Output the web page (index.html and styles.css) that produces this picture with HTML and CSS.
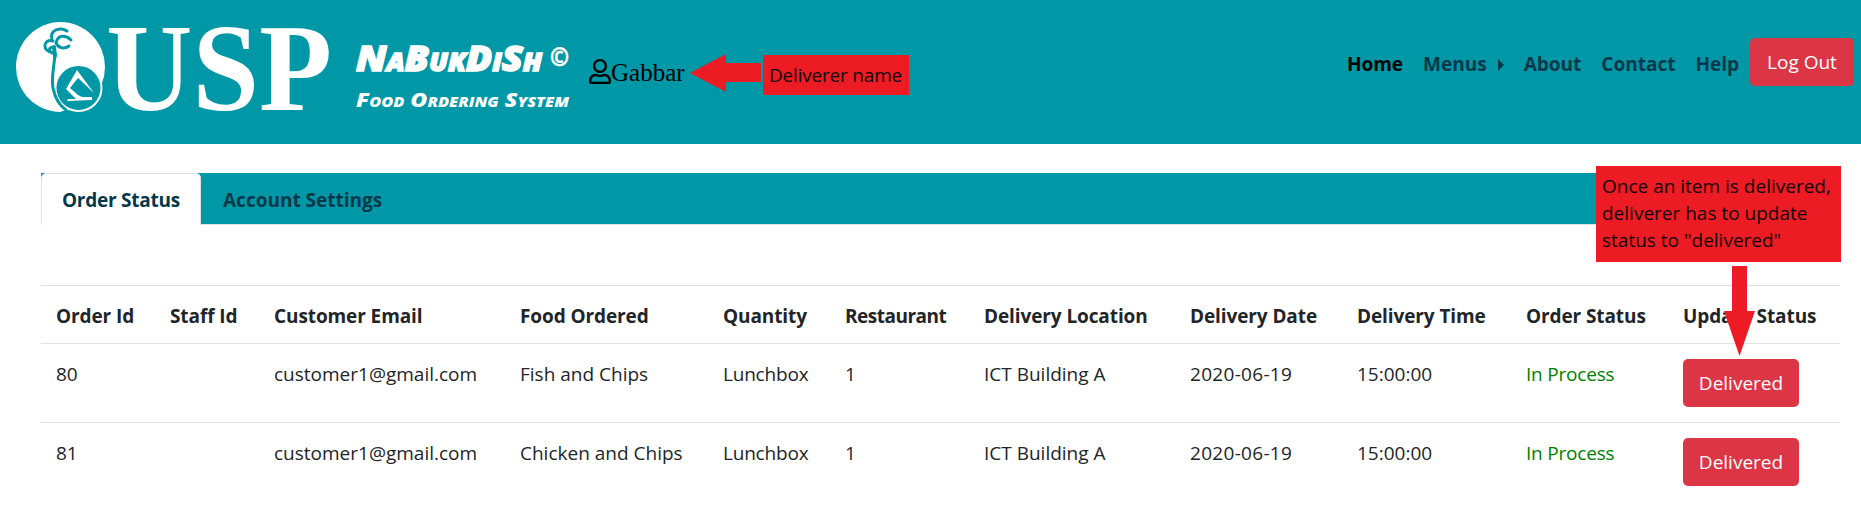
FILE: index.html
```html
<!DOCTYPE html>
<html lang="en">
<head>
<meta charset="utf-8">
<title>NaBukDiSh - Order Status</title>
<link rel="stylesheet" href="styles.css">
</head>
<body>
<header class="topbar">
  <svg class="logo" width="340" height="144" viewBox="0 0 340 144" role="img" aria-label="USP">
    <ellipse cx="60.500" cy="67" rx="44.500" ry="45" fill="#fff"/>
    <path d="M60 112C70 108 82 112 92 103L108 83V120H66Z" fill="#0097a7"/>
    <circle cx="78.500" cy="88" r="23" fill="#0097a7" stroke="#fff" stroke-width="2"/>
    <g fill="none" stroke="#0097a7" stroke-linecap="round">
      <path d="M55 54C54 68 51 78 53 88Q56 103 66 110" stroke-width="3"/>
      <path d="M52 40C49 29 61 27 67 31M56 43C58 33 67 36 71 40M56 43C59 49 65 49 69 46M53 41C43 38 41 52 54 53M54 47C48 47 49 51 52 53" stroke-width="3"/>
      <path d="M54 47L55 56" stroke-width="4"/>
    </g>
    <path d="M77 70L94 93L78 78L70 88L78 95L82 97H92V100L67 101L68 99H76L66 89Z" fill="#fff"/>
    <text class="logo-text" x="106" y="109.500" textLength="226" lengthAdjust="spacingAndGlyphs">USP</text>
  </svg>
  <svg class="brand" width="230" height="144" viewBox="0 0 230 144">
    <text class="brand-name" x="16" y="71" textLength="186" lengthAdjust="spacingAndGlyphs">NaBukDiSh</text>
    <text class="brand-copy" x="210" y="66" textLength="19" lengthAdjust="spacingAndGlyphs">©</text>
    <text class="brand-sub" x="16" y="107" textLength="213" lengthAdjust="spacingAndGlyphs">Food Ordering System</text>
  </svg>
  <div class="user">
    <svg width="22" height="25" viewBox="0 0 448 512"><path d="M313.600 304c-28.700 0-42.500 16-89.600 16s-60.800-16-89.600-16C60.200 304 0 364.200 0 438.400V464c0 26.500 21.500 48 48 48h352c26.500 0 48-21.500 48-48v-25.600c0-74.200-60.200-134.400-134.400-134.400zM400 464H48v-25.600c0-47.600 38.800-86.400 86.400-86.400 14.600 0 38.300 16 89.600 16 51.700 0 74.900-16 89.600-16 47.600 0 86.400 38.800 86.400 86.400V464zM224 288c79.500 0 144-64.500 144-144S303.500 0 224 0 80 64.500 80 144s64.500 144 144 144zm0-240c52.900 0 96 43.100 96 96s-43.100 96-96 96-96-43.100-96-96 43.100-96 96-96z"/></svg>
    <span>Gabbar</span>
  </div>
  <nav class="nav">
    <a class="nav-link active">Home</a>
    <a class="nav-link">Menus<i class="caret"></i></a>
    <a class="nav-link">About</a>
    <a class="nav-link">Contact</a>
    <a class="nav-link">Help</a>
    <button class="btn logout">Log Out</button>
  </nav>
</header>
<main class="content">
  <div class="tabs">
    <a class="tab selected">Order Status</a>
    <a class="tab">Account Settings</a>
  </div>
  <table class="orders">
    <colgroup><col class="c1"><col class="c2"><col class="c3"><col class="c4"><col class="c5"><col class="c6"><col class="c7"><col class="c8"><col class="c9"><col class="c10"><col class="c11"></colgroup>
    <thead>
      <tr><th>Order Id</th><th>Staff Id</th><th>Customer Email</th><th>Food Ordered</th><th>Quantity</th><th class="tight">Restaurant</th><th>Delivery Location</th><th>Delivery Date</th><th>Delivery Time</th><th>Order Status</th><th>Update Status</th></tr>
    </thead>
    <tbody>
      <tr><td>80</td><td></td><td>customer1@gmail.com</td><td>Fish and Chips</td><td class="tight">Lunchbox</td><td>1</td><td>ICT Building A</td><td class="date">2020-06-19</td><td>15:00:00</td><td class="process">In Process</td><td><button class="btn">Delivered</button></td></tr>
      <tr><td>81</td><td></td><td>customer1@gmail.com</td><td>Chicken and Chips</td><td class="tight">Lunchbox</td><td>1</td><td>ICT Building A</td><td class="date">2020-06-19</td><td>15:00:00</td><td class="process">In Process</td><td><button class="btn">Delivered</button></td></tr>
    </tbody>
  </table>
</main>
<svg class="arrow arrow-name" width="71" height="38" viewBox="0 0 71 38"><path d="M0 19L36 0V9H71V28H36V38Z"/></svg>
<div class="note note-name">Deliverer name</div>
<svg class="arrow arrow-status" width="31" height="90" viewBox="0 0 31 90"><path d="M8 0H23V45H31L15.500 90L0 45H8Z"/></svg>
<div class="note note-status">Once an item is delivered,<br>deliverer has to update<br>status to "delivered"</div>
</body>
</html>
```
FILE: styles.css
```css
* { box-sizing: border-box; }
body {
  margin: 0;
  height: 512px;
  overflow: hidden;
  position: relative;
  background: #fff;
  color: #212529;
  font: 19px/27px "Open Sans", "Noto Sans", sans-serif;
}
.topbar {
  display: flex;
  height: 144px;
  padding-right: 7px;
  background: #0097a7;
}
.logo, .brand { flex: none; display: block; overflow: visible; }
.logo-text {
  font: bold 125px "Liberation Serif", serif;
  fill: #fff;
}
.brand { fill: #fff; font-family: "Open Sans", sans-serif; font-style: italic; font-weight: 800; }
.brand-name { font-size: 36px; font-variant: small-caps; stroke: #fff; stroke-width: 1.5px; }
.brand-copy { font-size: 25px; font-weight: 700; stroke: #fff; stroke-width: 0.7px; }
.brand-sub { font-size: 20px; font-variant: small-caps; }
.user {
  display: flex;
  align-items: flex-start;
  margin-left: 19px;
  padding-top: 59px;
  color: #000;
  font: 25px/28px "Liberation Serif", serif;
}
.nav {
  display: flex;
  align-items: flex-start;
  margin-left: auto;
  padding-top: 38px;
}
.nav-link {
  display: flex;
  align-items: center;
  height: 52px;
  margin-right: 20px;
  color: #05384a;
  font-weight: 700;
}
.nav-link.active { color: #000; }
.nav-link:nth-child(5) { margin-right: 11px; }
.caret {
  margin: 2px 0 0 11px;
  border-left: 6px solid #05384a;
  border-top: 6px solid transparent;
  border-bottom: 6px solid transparent;
}
.btn {
  display: block;
  width: 116px;
  height: 48px;
  padding: 1px 0 0;
  border: 0;
  border-radius: 5px;
  background: #dc3545;
  color: #fff;
  font: inherit;
}
.logout { width: 104px; }
.content { padding: 29px 21px 0 41px; }
.tabs {
  display: flex;
  height: 52px;
  background: #0097a7;
  border-bottom: 1px solid #dee2e6;
}
.tab {
  height: 52px;
  padding: 13px 21px;
  border: 1px solid transparent;
  color: #05384a;
  font-weight: 700;
}
.tab.selected {
  width: 160px;
  padding: 13px 20px;
  background: #fff;
  border-color: #dee2e6;
  border-bottom-color: #fff;
  border-radius: 5px 5px 0 0;
  letter-spacing: -0.25px;
  white-space: nowrap;
}
.orders {
  width: 1799px;
  margin-top: 60px;
  border-collapse: separate;
  border-spacing: 0;
  table-layout: fixed;
}
.c1 { width: 114px; }
.c2 { width: 104px; }
.c3 { width: 246px; }
.c4 { width: 203px; }
.c5 { width: 122px; }
.c6 { width: 139px; }
.c7 { width: 206px; }
.c8 { width: 167px; }
.c9 { width: 169px; }
.c10 { width: 157px; }
.c11 { width: 172px; }
.orders th, .orders td {
  padding: 17px 0 13px 15px;
  border-top: 1px solid #dee2e6;
  text-align: left;
  vertical-align: top;
  white-space: nowrap;
}
.orders th { font-weight: 700; letter-spacing: -0.1px; }
.orders th.tight { letter-spacing: -0.5px; }
.orders td.tight { letter-spacing: -0.2px; }
.orders td.date { letter-spacing: 0.3px; }
.orders td.process { color: #008000; letter-spacing: -0.2px; }
.orders .btn { margin-top: -2px; margin-bottom: 2px; letter-spacing: 0; }
.arrow { position: absolute; fill: #ed1c24; }
.arrow-name { left: 690px; top: 54px; }
.arrow-status { left: 1724px; top: 266px; }
.note {
  position: absolute;
  background: #ed1c24;
  color: #100;
  white-space: nowrap;
}
.note-name { left: 763px; top: 55px; width: 146px; height: 40px; padding: 7px 6px; letter-spacing: -0.2px; }
.note-status { left: 1596px; top: 166px; width: 245px; height: 96px; padding: 7px 6px; }
```
